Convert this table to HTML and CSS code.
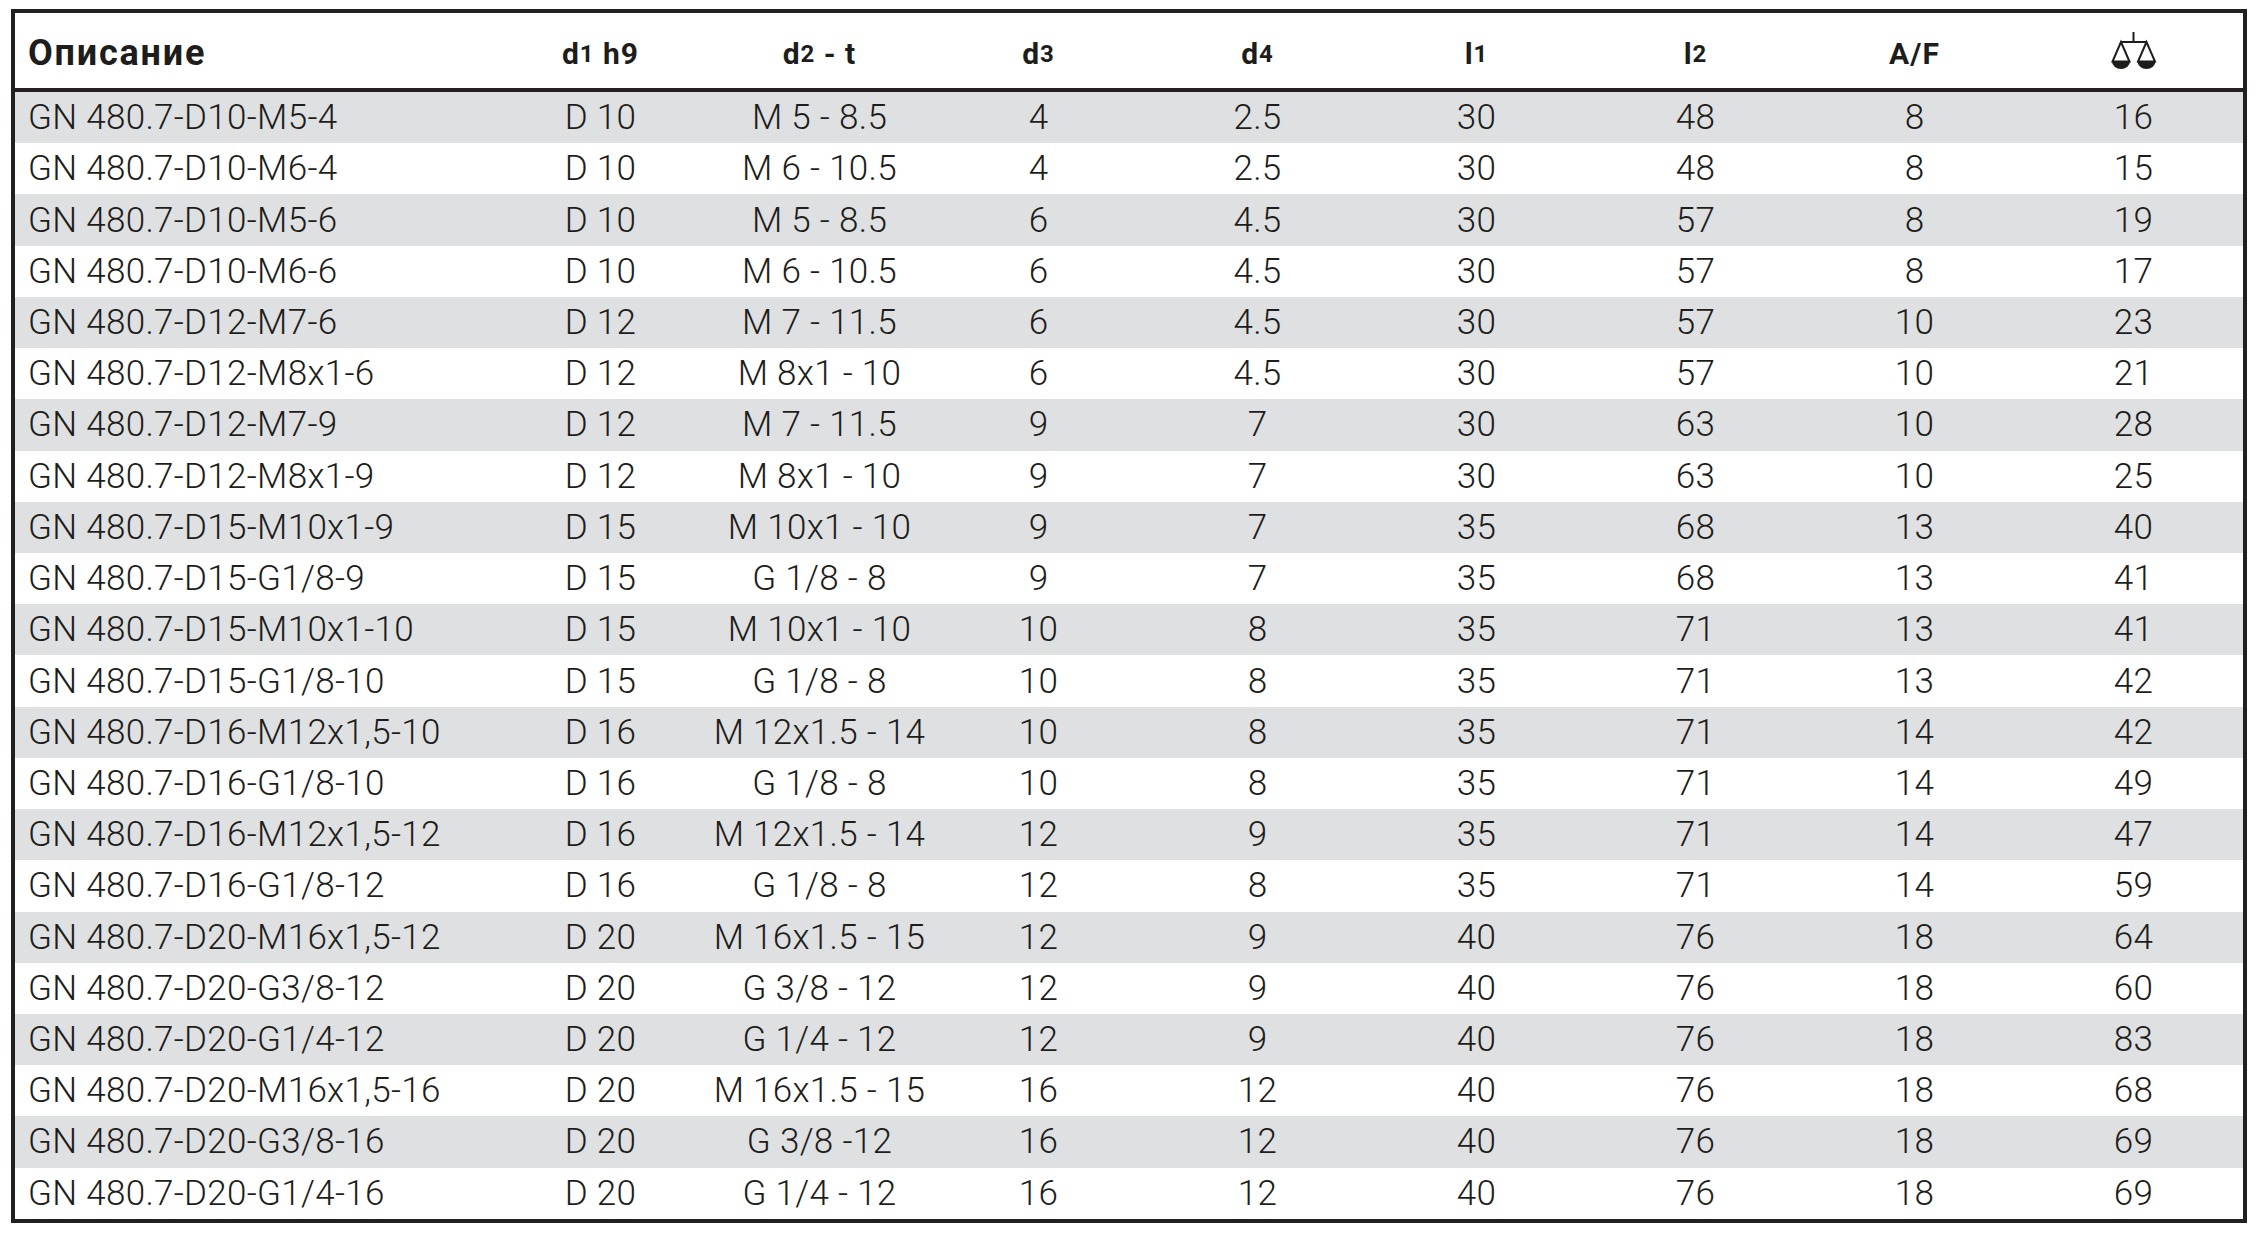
FILE: index.html
```html
<!DOCTYPE html>
<html lang="ru">
<head>
<meta charset="utf-8">
<title>GN 480.7</title>
<link rel="stylesheet" href="styles.css">
</head>
<body>
<div class="sheet">
  <div class="head">
    <div class="hc hc-desc">Описание</div>
    <div class="hc">d<span class="sub">1</span>&nbsp;h9</div>
    <div class="hc">d<span class="sub">2</span>&nbsp;-&nbsp;t</div>
    <div class="hc">d<span class="sub">3</span></div>
    <div class="hc">d<span class="sub">4</span></div>
    <div class="hc">l<span class="sub">1</span></div>
    <div class="hc">l<span class="sub">2</span></div>
    <div class="hc">A/F</div>
    <div class="hc hc-icon">
      <svg class="scale" width="46" height="40" viewBox="0 0 46 40" aria-label="вес">
        <line x1="22.5" y1="1" x2="22.5" y2="11" />
        <line x1="10" y1="11" x2="35.5" y2="11" />
        <path class="pan" d="M10 11 L1.5 30.5 L18.5 30.5 Z" />
        <path class="pan" d="M35.5 11 L27 30.5 L44 30.5 Z" />
        <path class="bowl" d="M1 30.5 A9 7.5 0 0 0 19 30.5 Z" />
        <path class="bowl" d="M26.5 30.5 A9 7.5 0 0 0 44.5 30.5 Z" />
      </svg>
    </div>
  </div>

  <div class="row"><div class="c c-desc">GN 480.7-D10-M5-4</div><div class="c">D 10</div><div class="c">M 5 - 8.5</div><div class="c">4</div><div class="c">2.5</div><div class="c">30</div><div class="c">48</div><div class="c">8</div><div class="c">16</div></div>
  <div class="row"><div class="c c-desc">GN 480.7-D10-M6-4</div><div class="c">D 10</div><div class="c">M 6 - 10.5</div><div class="c">4</div><div class="c">2.5</div><div class="c">30</div><div class="c">48</div><div class="c">8</div><div class="c">15</div></div>
  <div class="row"><div class="c c-desc">GN 480.7-D10-M5-6</div><div class="c">D 10</div><div class="c">M 5 - 8.5</div><div class="c">6</div><div class="c">4.5</div><div class="c">30</div><div class="c">57</div><div class="c">8</div><div class="c">19</div></div>
  <div class="row"><div class="c c-desc">GN 480.7-D10-M6-6</div><div class="c">D 10</div><div class="c">M 6 - 10.5</div><div class="c">6</div><div class="c">4.5</div><div class="c">30</div><div class="c">57</div><div class="c">8</div><div class="c">17</div></div>
  <div class="row"><div class="c c-desc">GN 480.7-D12-M7-6</div><div class="c">D 12</div><div class="c">M 7 - 11.5</div><div class="c">6</div><div class="c">4.5</div><div class="c">30</div><div class="c">57</div><div class="c">10</div><div class="c">23</div></div>
  <div class="row"><div class="c c-desc">GN 480.7-D12-M8x1-6</div><div class="c">D 12</div><div class="c">M 8x1 - 10</div><div class="c">6</div><div class="c">4.5</div><div class="c">30</div><div class="c">57</div><div class="c">10</div><div class="c">21</div></div>
  <div class="row"><div class="c c-desc">GN 480.7-D12-M7-9</div><div class="c">D 12</div><div class="c">M 7 - 11.5</div><div class="c">9</div><div class="c">7</div><div class="c">30</div><div class="c">63</div><div class="c">10</div><div class="c">28</div></div>
  <div class="row"><div class="c c-desc">GN 480.7-D12-M8x1-9</div><div class="c">D 12</div><div class="c">M 8x1 - 10</div><div class="c">9</div><div class="c">7</div><div class="c">30</div><div class="c">63</div><div class="c">10</div><div class="c">25</div></div>
  <div class="row"><div class="c c-desc">GN 480.7-D15-M10x1-9</div><div class="c">D 15</div><div class="c">M 10x1 - 10</div><div class="c">9</div><div class="c">7</div><div class="c">35</div><div class="c">68</div><div class="c">13</div><div class="c">40</div></div>
  <div class="row"><div class="c c-desc">GN 480.7-D15-G1/8-9</div><div class="c">D 15</div><div class="c">G 1/8 - 8</div><div class="c">9</div><div class="c">7</div><div class="c">35</div><div class="c">68</div><div class="c">13</div><div class="c">41</div></div>
  <div class="row"><div class="c c-desc">GN 480.7-D15-M10x1-10</div><div class="c">D 15</div><div class="c">M 10x1 - 10</div><div class="c">10</div><div class="c">8</div><div class="c">35</div><div class="c">71</div><div class="c">13</div><div class="c">41</div></div>
  <div class="row"><div class="c c-desc">GN 480.7-D15-G1/8-10</div><div class="c">D 15</div><div class="c">G 1/8 - 8</div><div class="c">10</div><div class="c">8</div><div class="c">35</div><div class="c">71</div><div class="c">13</div><div class="c">42</div></div>
  <div class="row"><div class="c c-desc">GN 480.7-D16-M12x1,5-10</div><div class="c">D 16</div><div class="c">M 12x1.5 - 14</div><div class="c">10</div><div class="c">8</div><div class="c">35</div><div class="c">71</div><div class="c">14</div><div class="c">42</div></div>
  <div class="row"><div class="c c-desc">GN 480.7-D16-G1/8-10</div><div class="c">D 16</div><div class="c">G 1/8 - 8</div><div class="c">10</div><div class="c">8</div><div class="c">35</div><div class="c">71</div><div class="c">14</div><div class="c">49</div></div>
  <div class="row"><div class="c c-desc">GN 480.7-D16-M12x1,5-12</div><div class="c">D 16</div><div class="c">M 12x1.5 - 14</div><div class="c">12</div><div class="c">9</div><div class="c">35</div><div class="c">71</div><div class="c">14</div><div class="c">47</div></div>
  <div class="row"><div class="c c-desc">GN 480.7-D16-G1/8-12</div><div class="c">D 16</div><div class="c">G 1/8 - 8</div><div class="c">12</div><div class="c">8</div><div class="c">35</div><div class="c">71</div><div class="c">14</div><div class="c">59</div></div>
  <div class="row"><div class="c c-desc">GN 480.7-D20-M16x1,5-12</div><div class="c">D 20</div><div class="c">M 16x1.5 - 15</div><div class="c">12</div><div class="c">9</div><div class="c">40</div><div class="c">76</div><div class="c">18</div><div class="c">64</div></div>
  <div class="row"><div class="c c-desc">GN 480.7-D20-G3/8-12</div><div class="c">D 20</div><div class="c">G 3/8 - 12</div><div class="c">12</div><div class="c">9</div><div class="c">40</div><div class="c">76</div><div class="c">18</div><div class="c">60</div></div>
  <div class="row"><div class="c c-desc">GN 480.7-D20-G1/4-12</div><div class="c">D 20</div><div class="c">G 1/4 - 12</div><div class="c">12</div><div class="c">9</div><div class="c">40</div><div class="c">76</div><div class="c">18</div><div class="c">83</div></div>
  <div class="row"><div class="c c-desc">GN 480.7-D20-M16x1,5-16</div><div class="c">D 20</div><div class="c">M 16x1.5 - 15</div><div class="c">16</div><div class="c">12</div><div class="c">40</div><div class="c">76</div><div class="c">18</div><div class="c">68</div></div>
  <div class="row"><div class="c c-desc">GN 480.7-D20-G3/8-16</div><div class="c">D 20</div><div class="c">G 3/8 -12</div><div class="c">16</div><div class="c">12</div><div class="c">40</div><div class="c">76</div><div class="c">18</div><div class="c">69</div></div>
  <div class="row"><div class="c c-desc">GN 480.7-D20-G1/4-16</div><div class="c">D 20</div><div class="c">G 1/4 - 12</div><div class="c">16</div><div class="c">12</div><div class="c">40</div><div class="c">76</div><div class="c">18</div><div class="c">69</div></div>
</div>
</body>
</html>
```

FILE: styles.css
```css
html, body {
  margin: 0;
  padding: 0;
  background: #ffffff;
}

body {
  font-family: Roboto, "Liberation Sans", sans-serif;
  color: #1d1d1b;
}

.sheet {
  margin: 9px 0 0 11px;
  width: 2228px;
  border: 4px solid #231f20;
}

.head,
.row {
  display: grid;
  grid-template-columns: 476px repeat(8, 219px);
}

.head {
  height: 75px;
  border-bottom: 4px solid #231f20;
}

.hc {
  display: flex;
  align-items: center;
  justify-content: center;
  padding-top: 6px;
  font-weight: 700;
  font-size: 30px;
  letter-spacing: 1px;
  line-height: 1;
  white-space: nowrap;
}

.hc-desc {
  justify-content: flex-start;
  padding-left: 13px;
  padding-top: 4px;
  font-size: 36px;
  letter-spacing: 1.8px;
}

.hc-icon {
  padding-top: 0;
}

.sub {
  font-size: 0.8em;
}

.scale {
  display: block;
  fill: none;
  stroke: #1d1d1b;
  stroke-width: 2;
}

.scale .bowl {
  fill: #1d1d1b;
  stroke: none;
}

.row {
  height: 51.23px;
}

.row:nth-child(even) {
  background: #dfe0e2;
}

.c {
  display: flex;
  align-items: center;
  justify-content: center;
  font-weight: 300;
  font-size: 35px;
  letter-spacing: 0.3px;
  line-height: 1;
  white-space: nowrap;
}

.c-desc {
  justify-content: flex-start;
  padding-left: 13px;
}
```
